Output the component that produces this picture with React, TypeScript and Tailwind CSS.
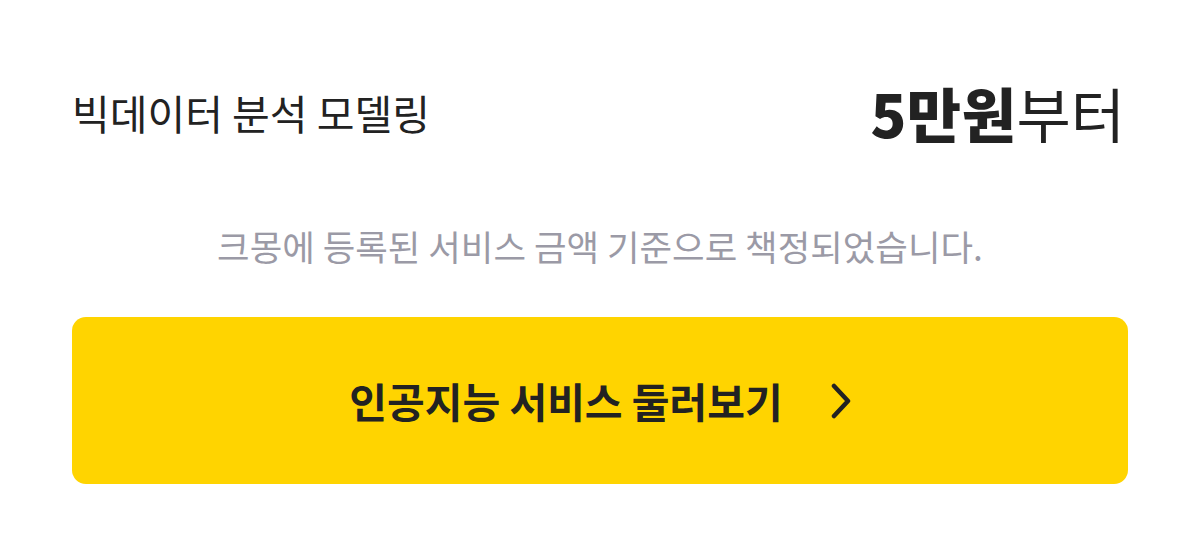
export default function App() {
  return (
    <div
      className="w-[1200px] h-[556px] bg-white px-[72px] pt-[74px] text-[#222222]"
      style={{ fontFamily: '"Noto Sans CJK KR", "Noto Sans", sans-serif' }}
    >
      {/* Header row: service name + price */}
      <div className="flex items-center justify-between h-[76px]">
        <h2 className="text-[41px] font-normal leading-none">빅데이터 분석 모델링</h2>
        <div className="text-[59px] leading-none pr-[3px]">
          <span className="font-black tracking-[0.5px]">5만원</span>
          <span className="font-normal">부터</span>
        </div>
      </div>

      <p className="mt-[78px] text-center text-[35.4px] leading-none text-[#9b9aa6]">
        크몽에 등록된 서비스 금액 기준으로 책정되었습니다.
      </p>

      <button className="mt-[54px] w-full h-[167px] rounded-[14px] bg-[#ffd400] flex items-center justify-center">
        <span className="text-[41px] font-bold leading-none text-[#222222]">인공지능 서비스 둘러보기</span>
        <svg className="ml-[48px] w-[20px] h-[36px]" viewBox="0 0 20 36" fill="none">
          <polyline
            points="3,3 17,18 3,33"
            stroke="#222222"
            strokeWidth={4.5}
            strokeLinecap="round"
            strokeLinejoin="round"
          />
        </svg>
      </button>
    </div>
  );
}
